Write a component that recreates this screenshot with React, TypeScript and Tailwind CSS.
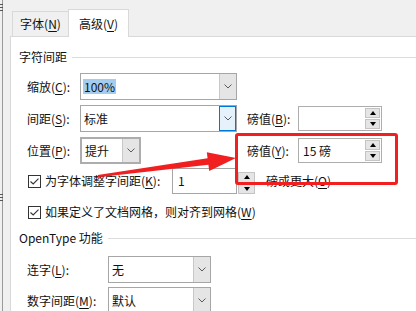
import React from 'react';

function Acc({ text, k, colon = false }: { text: string; k: string; colon?: boolean }) {
  return (
    <span className="whitespace-nowrap">
      {text}(<span className="underline underline-offset-[2px] decoration-1">{k}</span>){colon ? ':' : ''}
    </span>
  );
}

function Chevron() {
  return (
    <svg width="8" height="5" viewBox="0 0 8 5">
      <path d="M0.5 0.5 L4 4 L7.5 0.5" fill="none" stroke="#5a5a5a" strokeWidth="1" />
    </svg>
  );
}

function Combo({
  className,
  value,
  focus = false,
  selected = false,
}: {
  className: string;
  value: string;
  focus?: boolean;
  selected?: boolean;
}) {
  return (
    <div className={`flex h-[27px] bg-white ${className}`}>
      <div className="flex-1 flex items-center pl-[2px] min-w-0">
        <span className={selected ? 'bg-[#a3ccef] px-[1px] leading-[15px]' : 'px-[1px]'}>{value}</span>
      </div>
      {focus ? (
        <div className="w-[17px] flex items-center justify-center border border-[#0078d7] bg-[#e5f1fb]">
          <Chevron />
        </div>
      ) : (
        <div className="w-[17px] flex items-center justify-center bg-[#e5e5e5] border-l border-[#c8c8c8]">
          <Chevron />
        </div>
      )}
    </div>
  );
}

function SpinButtons({ className }: { className: string }) {
  return (
    <div className={`flex flex-col gap-[1px] ${className}`}>
      <div className="flex-1 flex items-center justify-center bg-[#e5e5e5] border border-[#c4c4c4]">
        <div className="w-0 h-0 border-x-[3px] border-x-transparent border-b-[4px] border-b-black" />
      </div>
      <div className="flex-1 flex items-center justify-center bg-[#e5e5e5] border border-[#c4c4c4]">
        <div className="w-0 h-0 border-x-[3px] border-x-transparent border-t-[4px] border-t-black" />
      </div>
    </div>
  );
}

function Spin({ value }: { value: string }) {
  return (
    <div className="flex w-[84px] h-[25px] border border-[#adadad] bg-white">
      <div className="flex-1 flex items-center pl-[4px]">{value}</div>
      <SpinButtons className="w-[17px] p-[1px]" />
    </div>
  );
}

function Check() {
  return (
    <div className="w-[13px] h-[13px] border border-[#333333] bg-white flex items-center justify-center">
      <svg width="9" height="7" viewBox="0 0 9 7">
        <path d="M0.5 3.5 L3.2 6 L8.5 0.6" fill="none" stroke="#333333" strokeWidth="1.1" />
      </svg>
    </div>
  );
}

function Section({ title }: { title: string }) {
  return (
    <div className="flex items-center h-[16px] pl-[8px]">
      <span className="whitespace-nowrap">{title}</span>
      <div className="flex-1 ml-[5px] h-px bg-[#dcdcdc]" />
    </div>
  );
}

export default function App() {
  return (
    <div className="relative w-[416px] h-[311px] overflow-hidden bg-[#f0f0f0] text-[12px] leading-[16px] text-[#111] font-['Noto_Sans_CJK_SC','Noto_Sans',sans-serif] flex flex-col">
      <div className="h-[6px] bg-white ml-[3px]" />
      <div className="flex flex-1">
        {/* left ruler edge */}
        <div className="w-[10px] flex">
          <div className="ml-[2px] w-px bg-[#9a9a9a]" />
        </div>

        <div className="flex-1 flex flex-col">
          {/* tabs */}
          <div className="h-[36px] flex items-end pl-[2px]">
            <div className="w-[56px] h-[25px] border-t border-l border-[#d9d9d9] flex items-center justify-center">
              <Acc text="字体" k="N" />
            </div>
            <div className="relative z-10 -mb-px w-[61px] h-[28px] bg-white border-t border-x border-[#d9d9d9] flex items-center justify-center">
              <Acc text="高级" k="V" />
            </div>
          </div>

          {/* panel */}
          <div className="flex-1 bg-white border-t border-l border-[#d9d9d9] flex flex-col">
            <div className="mt-[12px]">
              <Section title="字符间距" />
            </div>

            <div className="mt-[8px] h-[27px] flex items-center pl-[16px]">
              <div className="w-[53px]"><Acc text="缩放" k="C" colon /></div>
              <Combo className="w-[157px] border border-[#a6a6a6]" value="100%" selected />
            </div>

            <div className="mt-[5px] h-[27px] flex items-center pl-[16px]">
              <div className="w-[53px]"><Acc text="间距" k="S" colon /></div>
              <Combo className="w-[157px] border border-[#a6a6a6]" value="标准" focus />
              <div className="ml-[10px] w-[51px]"><Acc text="磅值" k="B" colon /></div>
              <Spin value="" />
            </div>

            <div className="mt-[5px] h-[27px] flex items-center pl-[16px]">
              <div className="w-[53px]"><Acc text="位置" k="P" colon /></div>
              <Combo className="w-[61px] border-2 border-[#adadad]" value="提升" />
              <div className="ml-[106px] w-[51px]"><Acc text="磅值" k="Y" colon /></div>
              <Spin value="15 磅" />
            </div>

            <div className="mt-[4px] h-[26px] flex items-center pl-[17px]">
              <Check />
              <div className="ml-[4px] w-[127px]"><Acc text="为字体调整字间距" k="K" colon /></div>
              <div className="w-[65px] h-[26px] border border-[#a6a6a6] flex items-center pl-[5px]">1</div>
              <SpinButtons className="self-end w-[17px] h-[22px] ml-px" />
              <div className="ml-[11px]"><Acc text="磅或更大" k="O" /></div>
            </div>

            <div className="mt-[8px] h-[20px] flex items-center pl-[17px]">
              <Check />
              <div className="ml-[4px]"><Acc text="如果定义了文档网格，则对齐到网格" k="W" /></div>
            </div>

            <div className="mt-[8px]">
              <Section title="OpenType 功能" />
            </div>

            <div className="mt-[10px] h-[27px] flex items-center pl-[16px]">
              <div className="w-[81px]"><Acc text="连字" k="L" colon /></div>
              <Combo className="w-[103px] border border-[#a6a6a6]" value="无" />
            </div>

            <div className="mt-[4px] h-[27px] flex items-center pl-[16px]">
              <div className="w-[81px]"><Acc text="数字间距" k="M" colon /></div>
              <Combo className="w-[103px] border border-[#a6a6a6]" value="默认" />
            </div>
          </div>
        </div>
      </div>

      {/* ruler marks on the left edge */}
      <div className="absolute left-0 top-[4px] w-[3px] flex flex-col gap-[2px]">
        <div className="h-px bg-[#555]" />
        <div className="h-px bg-[#555]" />
        <div className="h-px bg-[#555]" />
      </div>
      <div className="absolute left-0 top-[194px] w-[3px] flex flex-col gap-[2px]">
        <div className="h-px bg-[#555]" />
        <div className="h-px bg-[#555]" />
        <div className="h-px bg-[#555]" />
      </div>

      {/* annotation: red box + arrow */}
      <div className="absolute left-[235px] top-[133px] w-[163px] h-[52px] border-[3px] border-[#f11f1f] rounded-[3px] pointer-events-none" />
      <svg className="absolute left-0 top-0 pointer-events-none" width="416" height="311" viewBox="0 0 416 311">
        <polygon
          points="98,177.2 208.4,164.7 209.2,171 236,158 206.8,152.3 207.6,158.3 97.8,175"
          fill="#f11f1f"
        />
      </svg>
    </div>
  );
}
